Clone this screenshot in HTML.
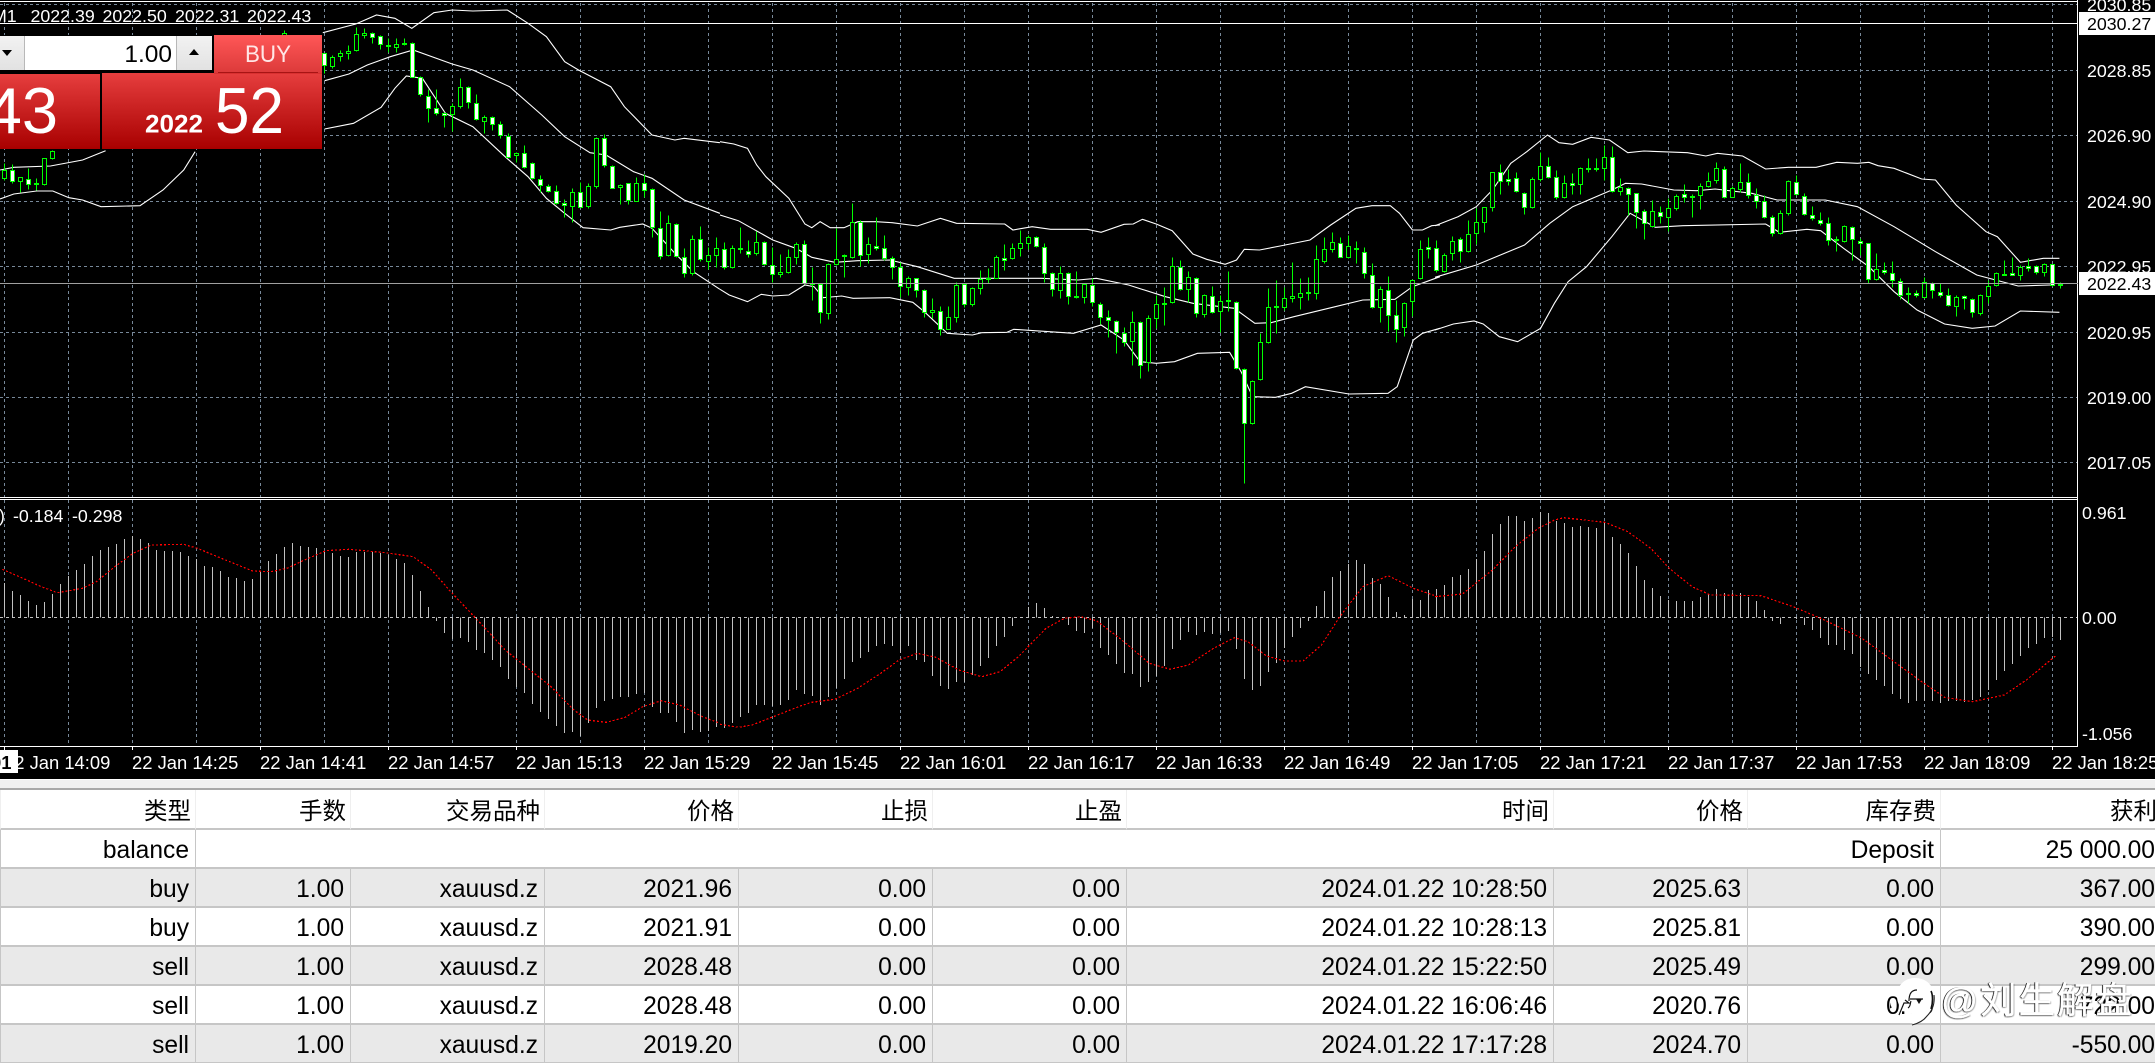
<!DOCTYPE html>
<html><head><meta charset="utf-8"><title>Chart</title>
<style>
html,body{margin:0;padding:0;background:#000;width:2155px;height:1063px;overflow:hidden}
body{position:relative;font-family:"Liberation Sans","Noto Sans CJK SC",sans-serif}
#ch{position:absolute;left:0;top:0}
.strip{position:absolute;left:0;top:779px;width:2155px;height:11px;background:#f0f0f0;border-top:1px solid #fff;box-sizing:border-box;border-bottom:2px solid #a8a8a8}
table{position:absolute;left:0;top:790px;width:2162px;table-layout:fixed;border-collapse:separate;border-spacing:0;background:#fff;color:#000;font-size:24.6px}
td,th{height:39px;box-sizing:border-box;padding:5px 6px 0 0;vertical-align:top;text-align:right;font-weight:normal;white-space:nowrap;overflow:hidden;border-right:1px solid #c6c6c6;border-bottom:2px solid #c6c6c6;line-height:32px}
td:first-child,th:first-child{border-left:1px solid #c6c6c6}
th{font-size:23.5px;height:40px;padding:4px 4px 0 0;line-height:34px;border-right:1px solid #efefef}
th:first-child{border-left:1px solid #efefef}
tr.g td{background:#e9e9e9}
</style></head><body>
<svg id="ch" width="2155" height="780" viewBox="0 0 2155 780" xmlns="http://www.w3.org/2000/svg" font-family="'Liberation Sans',sans-serif" fill="#fff">
<defs>
<linearGradient id="r1" x1="0" y1="0" x2="0" y2="1"><stop offset="0" stop-color="#e63e3e"/><stop offset="1" stop-color="#a80000"/></linearGradient>
<linearGradient id="r2" x1="0" y1="0" x2="0" y2="1"><stop offset="0" stop-color="#ff5757"/><stop offset="1" stop-color="#dc3a3a"/></linearGradient>
<linearGradient id="gb" x1="0" y1="0" x2="0" y2="1"><stop offset="0" stop-color="#f2f2f2"/><stop offset="1" stop-color="#e2e2e2"/></linearGradient>
</defs>
<rect width="2155" height="780" fill="#000"/>
<g id="grid" shape-rendering="crispEdges" stroke="#778899" stroke-dasharray="3 3" fill="none"></g>
<g id="macd" shape-rendering="crispEdges" stroke="#c0c0c0" fill="none"></g>
<g id="bb" stroke="#fff" stroke-width="1.1" fill="none"></g>
<g id="cand" shape-rendering="crispEdges"></g>
<g id="sig" stroke="#ff0000" stroke-dasharray="2 2" stroke-width="1.2" shape-rendering="crispEdges" fill="none"></g>
<g shape-rendering="crispEdges" stroke="#fff" fill="none">
<path d="M0 1.5H2078M0 23.5H2078M0 497.5H2078M0 499.5H2078M0 746.5H2078M2077.5 0V746"/>
<path stroke="#a0a0a0" d="M0 283.5H2078"/>
<path id="ticks"/>
</g>
<!-- axis labels -->
<g font-size="17.8">
<text x="2087" y="11">2030.85</text>
<text x="2087" y="77">2028.85</text>
<text x="2087" y="142">2026.90</text>
<text x="2087" y="208">2024.90</text>
<text x="2087" y="273">2022.95</text>
<text x="2087" y="339">2020.95</text>
<text x="2087" y="404">2019.00</text>
<text x="2087" y="469">2017.05</text>
<rect x="2079" y="12" width="76" height="23" fill="#fff"/>
<text x="2087" y="30" fill="#000">2030.27</text>
<rect x="2079" y="272" width="76" height="23" fill="#fff"/>
<text x="2087" y="290" fill="#000">2022.43</text>
<text x="2082" y="519">0.961</text>
<text x="2082" y="624">0.00</text>
<text x="2082" y="740">-1.056</text>
<text x="-8" y="22">M1</text>
<text x="30.5" y="22">2022.39</text>
<text x="102.5" y="22">2022.50</text>
<text x="175" y="22">2022.31</text>
<text x="247" y="22">2022.43</text>
<text x="-1" y="522">)</text>
<text x="13" y="522">-0.184</text>
<text x="72" y="522">-0.298</text>
</g>
<g font-size="18.4">
<text x="4" y="769">22 Jan 14:09</text>
<text x="132" y="769">22 Jan 14:25</text>
<text x="260" y="769">22 Jan 14:41</text>
<text x="388" y="769">22 Jan 14:57</text>
<text x="516" y="769">22 Jan 15:13</text>
<text x="644" y="769">22 Jan 15:29</text>
<text x="772" y="769">22 Jan 15:45</text>
<text x="900" y="769">22 Jan 16:01</text>
<text x="1028" y="769">22 Jan 16:17</text>
<text x="1156" y="769">22 Jan 16:33</text>
<text x="1284" y="769">22 Jan 16:49</text>
<text x="1412" y="769">22 Jan 17:05</text>
<text x="1540" y="769">22 Jan 17:21</text>
<text x="1668" y="769">22 Jan 17:37</text>
<text x="1796" y="769">22 Jan 17:53</text>
<text x="1924" y="769">22 Jan 18:09</text>
<text x="2052" y="769">22 Jan 18:25</text>
<rect x="0" y="750" width="18" height="23" fill="#fff"/>
<text x="-9" y="769" fill="#000" font-weight="bold">01</text>
</g>
<!-- trade panel -->
<rect x="0" y="35" width="214" height="38" fill="#000"/>
<rect x="0" y="36" width="24" height="34" fill="url(#gb)"/>
<rect x="25" y="36" width="151" height="34" fill="#fff"/>
<rect x="177" y="36" width="35" height="34" fill="url(#gb)"/>
<rect x="24" y="36" width="1" height="34" fill="#b8b8b8"/>
<rect x="176" y="36" width="1" height="34" fill="#b8b8b8"/>
<path d="M2 50H12L7 56Z" fill="#000"/>
<path d="M189 55H199L194 49Z" fill="#000"/>
<text x="172" y="62" font-size="24.5" fill="#000" text-anchor="end">1.00</text>
<rect x="214" y="35" width="108" height="38" fill="url(#r2)"/>
<rect x="218" y="72" width="100" height="1" fill="#a81414"/>
<text x="245" y="62" font-size="24" fill="#ffe6e6" textLength="46" lengthAdjust="spacingAndGlyphs">BUY</text>
<rect x="0" y="74" width="100" height="75" fill="url(#r1)"/>
<rect x="100" y="73" width="2" height="77" fill="#000"/>
<rect x="102" y="73" width="220" height="76" fill="url(#r1)"/>
<rect x="214" y="73" width="108" height="1" fill="#d93030"/>
<text x="58" y="133" font-size="65" text-anchor="end">43</text>
<text x="145" y="132.5" font-size="24.6" font-weight="bold" textLength="58" lengthAdjust="spacingAndGlyphs">2022</text>
<text x="215" y="133" font-size="65" textLength="69" lengthAdjust="spacingAndGlyphs">52</text>
</svg>

<div class="strip"></div>
<table>
<colgroup><col style="width:196px"><col style="width:155px"><col style="width:194px"><col style="width:194px"><col style="width:194px"><col style="width:194px"><col style="width:427px"><col style="width:194px"><col style="width:193px"><col style="width:221px"></colgroup>
<tr><th>类型</th><th>手数</th><th>交易品种</th><th>价格</th><th>止损</th><th>止盈</th><th>时间</th><th>价格</th><th>库存费</th><th>获利</th></tr>
<tr><td>balance</td><td colspan="8">Deposit</td><td>25 000.00</td></tr>
<tr class="g"><td>buy</td><td>1.00</td><td>xauusd.z</td><td>2021.96</td><td>0.00</td><td>0.00</td><td>2024.01.22 10:28:50</td><td>2025.63</td><td>0.00</td><td>367.00</td></tr>
<tr><td>buy</td><td>1.00</td><td>xauusd.z</td><td>2021.91</td><td>0.00</td><td>0.00</td><td>2024.01.22 10:28:13</td><td>2025.81</td><td>0.00</td><td>390.00</td></tr>
<tr class="g"><td>sell</td><td>1.00</td><td>xauusd.z</td><td>2028.48</td><td>0.00</td><td>0.00</td><td>2024.01.22 15:22:50</td><td>2025.49</td><td>0.00</td><td>299.00</td></tr>
<tr><td>sell</td><td>1.00</td><td>xauusd.z</td><td>2028.48</td><td>0.00</td><td>0.00</td><td>2024.01.22 16:06:46</td><td>2020.76</td><td>0.00</td><td>722.00</td></tr>
<tr class="g"><td>sell</td><td>1.00</td><td>xauusd.z</td><td>2019.20</td><td>0.00</td><td>0.00</td><td>2024.01.22 17:17:28</td><td>2024.70</td><td>0.00</td><td>-550.00</td></tr>
</table>

<svg style="position:absolute;left:1890px;top:975px" width="60" height="60" viewBox="0 0 60 60" xmlns="http://www.w3.org/2000/svg">
<path d="M25 3C14 3 7 11 7 21C7 29 11 33 14 36L24 40C24 45 23 47 22 50C30 48 34 45 37 41C42 36 45 29 44 20C43 9 35 3 25 3Z" fill="#fff"/>
<path d="M22 50C30 48 34 45 37 41C42 36 45 29 44 20" fill="none" stroke="#222" stroke-width="1.1"/>
<path d="M9 40L14 28H19L15 25M19 26C19 18 22 15 27 15M20 24H33M18 33C21 31 20 28 21 26" fill="none" stroke="#111" stroke-width="1.2"/>
<path d="M26 24H32L29 29Z" fill="#111"/>
<path d="M-1 25C-1 29 0 31 1 33M41 16C43 20 43 28 41 34" fill="none" stroke="#111" stroke-width="1.6"/>
</svg>
<div style="position:absolute;left:1941px;top:976px;font-family:'Liberation Sans','Noto Sans CJK SC',sans-serif;font-size:36.5px;line-height:50px;letter-spacing:2px;color:#fff;white-space:nowrap;-webkit-text-stroke:.3px #fff;text-shadow:-1px 0 0 rgba(0,0,0,.85),-1px 1px 1px rgba(0,0,0,.45),1px 1px 1px rgba(0,0,0,.3)">@刘生解盘</div>

<script>
var NS="http://www.w3.org/2000/svg";
function el(p,n,a){var e=document.createElementNS(NS,n);for(var k in a)e.setAttribute(k,a[k]);p.appendChild(e);return e}
var $=function(i){return document.getElementById(i)};
// grid
(function(){var g=$("grid"),d="";
for(var k=0;k<33;k++){var x=4.5+64*k;d+="M"+x+" 3V497M"+x+" 500V746";}
[4.5,70.5,135.5,201.5,266.5,332.5,397.5,462.5].forEach(function(y){d+="M0 "+y+"H2077";});
el(g,"path",{d:d});
el(g,"path",{d:"M0 617.5H2077",stroke:"#c0c0c0"});
var t="";for(var i=0;i<17;i++){var x=4.5+128*i;t+="M"+x+" 746V750";}
$("ticks").setAttribute("d",t);
})();
// candles: k -> [top,bot,hi,lo,white] in zoom y units (÷3)
var C={};
function add(s,a){a.forEach(function(c,i){C[s+i]=c})}
add(0,[[510,535,490,540,0],[510,543,493,548,1],[532,542,532,575,0],[538,553,503,567,1],[550,553,535,570,0],[475,553,475,555,0],[453,475,450,476,0]]);
C[35]=[100,105,90,105,0];
add(40,[[160,195,158,220,1],[170,198,165,205,0],[160,168,150,182,0],[152,160,135,178,0],[103,150,82,152,0],[98,105,85,115,0],[98,110,95,128,1],[108,133,105,147,1],[134,137,115,155,0],[131,140,115,155,0],[128,131,115,135,0],[128,230,125,232,1],[230,283,228,287,1],[287,325,268,365,1],[325,340,268,345,1],[338,343,335,380,1],[317,342,310,392,0],[260,317,235,325,0],[260,307,258,325,1],[308,358,283,360,1],[350,362,345,398,0],[350,373,348,390,1],[373,405,363,415,1],[408,470,400,472,1],[458,466,455,485,0],[458,500,435,505,1],[488,535,485,538,1],[538,555,525,575,1],[557,572,552,575,1],[572,610,555,613,1],[610,615,597,652,1],[575,617,565,665,0],[575,620,545,622,1],[557,618,548,625,0],[415,557,412,563,0],[415,495,403,502,1],[497,563,495,565,1],[555,562,553,612,0],[550,600,548,612,1],[550,602,532,603,0],[550,570,523,590,1],[568,682,565,710,1],[683,767,632,778,1],[668,765,645,768,0],[672,768,670,770,1],[770,820,745,832,1],[718,818,705,825,0],[718,778,678,782,1],[765,782,740,808,0],[745,765,710,800,0]]);
add(90,[[748,802,727,808,1],[745,800,735,803,0],[745,748,682,760,0],[752,763,720,772,1],[725,760,692,765,0],[725,793,723,796,1],[794,822,742,845,1],[815,823,762,830,0],[770,815,748,818,0],[733,770,725,792,0],[732,850,720,852,1],[850,853,800,900,0],[853,937,850,968,1],[793,940,790,957,0],[776,793,685,795,0],[766,770,762,830,0],[665,770,610,775,0],[665,765,660,797,1],[733,763,712,790,0],[738,745,652,750,1],[745,775,706,780,1],[775,802,767,838,1],[802,858,785,892,1],[835,860,828,885,0],[835,870,833,890,1],[870,935,868,950,1],[930,935,895,955,0],[932,988,918,1005,1],[950,986,918,988,0],[855,950,845,965,0],[853,913,850,920,1],[865,913,860,918,0],[838,865,810,882,0],[833,836,805,850,0],[770,833,765,835,0],[773,778,732,810,1],[745,775,730,777,0],[730,745,690,768,0],[712,730,705,748,0],[712,738,708,740,1],[742,820,728,845,1],[820,868,815,888,1],[818,870,798,893,0],[818,888,815,912,1],[888,892,812,895,0],[852,892,850,910,0],[856,906,835,918,1],[913,952,905,972,1],[950,960,930,1010,1],[962,997,960,1060,1],[998,1025,980,1038,1],[967,1022,933,1095,0],[965,1095,962,1133,1],[955,1085,945,1112,0],[912,955,885,985,0],[910,914,860,975,0],[797,907,770,908,0],[800,868,780,870,1],[832,868,812,905,0],[835,940,830,952,1],[884,943,882,950,0],[887,935,858,938,1],[902,932,885,995,0],[900,904,812,932,0],[905,1105,903,1107,1],[1107,1270,1105,1450,1],[1142,1270,1140,1272,0],[1025,1138,1000,1140,0],[922,1026,865,1028,0],[919,922,840,1000,0],[895,920,860,930,0],[889,895,785,905,0],[878,892,835,928,0],[877,880,830,900,0],[778,880,735,898,0],[748,782,712,790,0],[725,748,695,755,0],[728,770,712,772,1],[738,772,705,775,0],[745,748,722,790,0],[755,820,742,833,1],[825,920,790,925,1],[868,922,858,965,0],[870,945,828,992,1],[945,987,900,1025,1],[908,982,905,1008,0],[840,902,838,948,0],[748,835,720,838,0],[740,748,712,775,1],[745,810,720,815,1]]);
add(180,[[765,812,760,815,0],[722,760,708,780,0],[718,752,712,785,1],[703,752,660,755,0],[665,700,625,732,0],[622,665,620,695,0],[517,620,515,633,0],[515,542,492,582,1],[536,544,508,555,1],[533,573,515,577,1],[578,622,575,643,1],[538,622,530,625,0],[497,538,455,543,0],[497,530,472,535,1],[530,590,510,598,1],[550,590,525,593,0],[550,555,520,582,1],[503,553,500,582,0],[505,508,475,515,0],[505,508,475,512,0],[470,505,435,540,0],[472,572,438,575,1],[560,572,535,585,0],[563,582,560,645,1],[580,635,578,685,1],[632,668,628,718,1],[632,678,600,682,0],[635,648,618,670,1],[625,650,595,693,0],[588,625,582,630,0],[583,590,552,605,1],[587,590,582,652,0],[557,585,550,628,0],[542,557,515,560,0],[505,540,487,548,0],[506,592,497,594,1],[563,590,558,592,0],[545,566,488,575,0],[545,584,520,595,1],[586,603,565,625,1],[603,652,585,655,1],[650,698,645,708,1],[640,698,630,702,0],[544,640,540,646,0],[545,582,525,585,1],[587,642,580,645,1],[645,655,618,660,1],[660,670,637,675,1],[668,720,652,735,1],[718,720,708,752,0],[677,722,675,725,0],[680,716,678,780,1],[722,730,715,765,1],[730,837,728,850,1],[808,837,760,840,0],[810,817,785,822,1],[818,840,783,860,1],[842,885,835,898,1],[880,884,860,908,0],[880,885,870,890,1],[845,890,832,893,0],[848,870,845,895,1],[875,884,850,890,1],[884,915,865,918,1],[890,917,885,947,0],[888,895,885,927,1],[898,937,895,950,1],[886,940,883,945,0],[857,888,840,910,0],[820,856,815,858,0],[822,824,780,825,0],[820,824,772,825,1],[802,824,795,840,0],[797,802,775,812,1],[797,815,795,822,1],[793,815,790,827,0],[793,856,792,858,1],[852,855,845,863,0]]);
(function(){var g=$("cand"),G="#00ff00";
for(var k in C){var c=C[k],x=4.5+8*k,y=function(v){return Math.round(v/3)+.5};
el(g,"path",{d:"M"+x+" "+y(c[2])+"V"+y(c[3]),stroke:G,fill:"none"});
var t=y(c[0]),b=y(c[1]);if(b-t<2)b=t+2;
if(!c[4]&&c[1]-c[0]<=4){el(g,"rect",{x:x-2.5,y:t-.5,width:5,height:2,fill:G});}
else el(g,"rect",{x:x-2,y:t,width:4,height:b-t,fill:c[4]?"#fff":"#000",stroke:G});
}})();
// lines: offset per zoom section
function P(o,a,c){var s=[];for(var i=0;i<a.length;i+=2){s.push(((o+a[i]/2.178)).toFixed(1)+","+(c+a[i+1]/3).toFixed(1))}return s.join(" ")}
function L(g,o,a,c){el($(g),"polyline",{points:P(o,a,c)})}
var U1=[703,98,775,72,820,45,860,55,897,85,945,38,985,30,1030,33,1105,30,1150,70,1190,110,1230,185,1260,210,1330,260,1360,320,1420,405,1470,420,1490,415,1568,428];
var M1=[707,242,760,222,800,195,850,170,900,150,985,192,1030,210,1110,260,1180,345,1230,410,1285,458,1320,465,1380,515,1420,535,1490,600,1568,640];
var L1=[707,387,770,370,830,322,860,265,885,228,920,235,970,340,1030,380,1100,470,1150,530,1190,595,1230,640,1270,683,1330,690,1350,682,1400,672,1420,685,1470,760,1510,815,1568,868];
var Lm=[0,510,30,502,110,498,180,480,230,452];
var Ll=[0,597,30,582,80,573,115,573,150,593,180,600,220,620,305,617,355,570,400,510,425,455];
var U2=[0,425,30,432,60,445,80,495,100,530,150,595,185,672,200,683,218,665,240,683,270,683,300,665,340,665,375,668,430,678,480,655,515,670,620,672,638,690,680,680,720,688,800,688,830,697,880,673,900,672,920,658,950,672,985,692,1030,762,1060,778,1100,793,1125,780,1142,748,1175,750,1220,738,1285,720,1330,675,1385,625,1420,617,1460,617,1480,640,1508,690,1530,690,1550,677,1568,675];
var M2=[0,645,40,662,115,720,165,745,200,772,250,787,300,782,370,780,430,800,510,835,630,835,700,835,780,840,820,835,890,855,970,890,1030,910,1120,925,1165,970,1200,968,1250,950,1340,920,1400,900,1470,898,1508,860,1568,830];
var L2=[0,868,20,885,60,905,90,883,115,888,150,885,185,855,205,860,225,893,265,888,290,895,370,893,420,907,445,935,495,1000,550,1005,570,998,625,997,640,988,770,1000,830,975,880,1020,915,1085,950,1090,990,1085,1040,1060,1110,1057,1135,1115,1160,1190,1210,1192,1245,1180,1275,1160,1370,1182,1455,1180,1475,1160,1510,1020,1530,1000,1568,985];
var U3=[0,677,50,650,90,620,125,570,165,490,200,455,245,405,270,428,300,433,340,412,380,420,420,458,455,453,550,458,590,468,615,460,670,468,720,507,770,502,830,502,875,487,920,490,945,487,965,497,1000,505,1060,537,1090,540,1135,615,1200,695,1225,710,1275,787,1325,775,1360,775];
var M3=[0,832,90,795,195,735,250,670,300,620,385,570,415,550,450,552,520,570,570,572,610,567,690,580,745,600,850,600,920,620,1000,680,1090,755,1180,825,1270,858,1340,855];
var L3=[0,990,40,972,85,963,105,972,140,1010,180,1025,230,985,260,910,290,845,330,800,385,710,425,640,480,682,540,677,720,672,750,697,810,688,840,692,890,745,945,800,1000,875,1050,930,1110,972,1170,985,1220,978,1275,933,1360,937];
[[0,U1],[0,M1],[0,L1],[0,Lm],[0,Ll],[720,U2],[720,M2],[720,L2],[1435,U3],[1435,M3],[1435,L3]].forEach(function(r){L("bb",r[0],r[1],0)});
// macd histogram (values in zoom y units, zero=382, origin 490)
var H=[280,303,315,333,345,335,312,282,258,240,222,198,180,170,162,148,137,147,160,180,183,183,185,197,207,228,232,243,262,264,272,268,245,212,192,170,158,168,170,173,183,188,197,200,185,185,185,190,195,208,220,255,303,350,392,428,447,443,455,480,490,510,530,567,590,610,642,665,688,708,728,725,737,700,655,632,628,622,620,612,610,650,668,668,695,728,720,725,722,710,
715,698,680,668,645,645,648,645,630,600,612,618,645,620,595,568,515,503,485,467,463,468,490,467,510,515,557,588,597,575,575,555,528,505,468,440,408,382,352,340,353,378,382,405,423,430,415,475,495,522,548,553,590,575,557,527,478,450,427,435,427,432,430,423,477,567,600,587,545,520,475,440,413,392,348,303,262,243,222,210,222,265,282,322,365,376,328,330,300,297,
285,262,255,237,208,183,132,102,78,78,93,85,65,70,92,100,110,108,110,115,97,142,163,188,228,270,293,318,330,332,333,333,322,312,297,310,310,310,322,332,360,392,402,382,388,405,420,443,465,465,480,493,530,552,570,588,612,628,638,632,632,632,638,632,632,635,630,622,600,570,543,523,497,473,462,445,440,450];
(function(){var d="";H.forEach(function(v,k){var x=4.5+8*k,y=Math.round(490+v/3);if(v==382)return;d+="M"+x+" 617.5V"+y;});el($("macd"),"path",{d:d});})();
var S1=[5,238,50,265,90,290,125,308,180,295,210,275,250,230,290,190,330,165,400,163,430,175,500,215,550,243,590,245,625,235,660,212,710,182,760,178,840,188,900,200,940,240,985,310,1040,390,1100,480,1200,590,1250,660,1280,690,1320,697,1360,683,1400,650,1440,632,1480,645,1530,680,1568,700];
var S2=[0,703,40,712,70,705,120,678,175,648,200,637,250,628,300,595,350,550,390,510,430,490,470,502,520,540,570,560,610,545,650,500,710,415,750,385,785,380,820,392,880,455,935,520,980,538,1020,525,1075,475,1120,443,1150,455,1190,498,1230,513,1270,513,1310,465,1350,380,1400,290,1455,257,1510,295,1568,322];
var S3=[0,320,60,312,125,240,175,170,225,115,260,90,280,83,370,97,420,125,470,175,510,235,560,290,600,315,710,317,780,350,840,385,930,445,1000,515,1060,575,1110,622,1170,635,1240,615,1290,568,1352,497];
L("sig",0,S1,490);L("sig",720,S2,490);L("sig",1435,S3,490);
</script>
</body></html>
